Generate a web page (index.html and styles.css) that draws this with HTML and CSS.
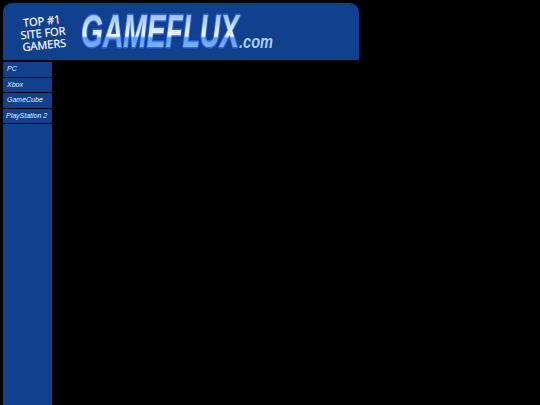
FILE: index.html
```html
<!DOCTYPE html>
<html lang="en">
<head>
    <meta charset="UTF-8">
    <title>GameFlux</title>
    <link rel="stylesheet" href="styles.css">
</head>

<body>
<div class="header">
    <div class="tagline">
        <span>TOP #1</span>
        <span>SITE FOR</span>
        <span>GAMERS</span>
    </div>
    <svg class="logo" width="200" height="56" viewBox="0 0 200 56">
        <defs>
            <linearGradient id="shine" x1="0" y1="0" x2="0" y2="1">
                <stop offset="0" stop-color="#4f8ff0"/>
                <stop offset="0.25" stop-color="#a9c9f5"/>
                <stop offset="0.6" stop-color="#f2f7fe"/>
                <stop offset="0.64" stop-color="#5f9ef2"/>
                <stop offset="1" stop-color="#9cc8fb"/>
            </linearGradient>
        </defs>
        <text class="logo-main" transform="translate(3 43) scale(.612 1)">GAMEFLUX</text>
        <text class="logo-com" transform="translate(161 44) scale(.81 1)">.com</text>
    </svg>
</div>
<div class="sidebar">
    <a class="item" href="#">PC</a>
    <a class="item" href="#">Xbox</a>
    <a class="item" href="#">GameCube</a>
    <a class="item item-long" href="#">PlayStation 2</a>
    <div class="rest"></div>
</div>
</body>
</html>
```

FILE: styles.css
```css
html, body {
    height: 100%;
}

body {
    margin: 0;
    padding: 3px 0 0 3px;
    box-sizing: border-box;
    background-color: #000;
    display: flex;
    flex-direction: column;
    align-items: flex-start;
    font-family: "Liberation Sans", Arial, sans-serif;
    overflow: hidden;
}

.header {
    width: 356px;
    height: 57px;
    flex: none;
    display: flex;
    align-items: flex-start;
    background-color: #10408e;
    border-radius: 9px 9px 0 0;
}

.tagline {
    width: 66px;
    margin: 12px 0 0 7px;
    display: flex;
    flex-direction: column;
    align-items: center;
    color: #fff;
    font-family: "Open Sans", sans-serif;
    font-size: 11px;
    font-weight: 400;
    line-height: 12px;
    -webkit-text-stroke: 0.2px #fff;
    transform: rotate(-6deg);
}

.logo {
    margin: 1px 0 0 2px;
}

.logo text {
    font-family: "Liberation Sans", Arial, sans-serif;
    font-style: italic;
    font-weight: 700;
}

.logo-main {
    font-size: 46px;
    fill: url(#shine);
    stroke: #2f66e0;
    stroke-width: 3px;
    stroke-linejoin: round;
    paint-order: stroke;
    filter: drop-shadow(0 0 1px #0d2f96);
}

.logo .logo-com {
    font-size: 18px;
    font-weight: 700;
    fill: #a9cdf8;
}

.sidebar {
    width: 49px;
    flex: 1;
    margin-top: 2px;
    display: flex;
    flex-direction: column;
    gap: 1px;
}

.item {
    height: 14.5px;
    line-height: 14.5px;
    padding-left: 4px;
    background-color: #10408e;
    color: #e6eefb;
    font-size: 7px;
    font-style: italic;
    text-decoration: none;
}

.item-long {
    padding-left: 3px;
}

.rest {
    flex: 1;
    background-color: #10408e;
}
```
